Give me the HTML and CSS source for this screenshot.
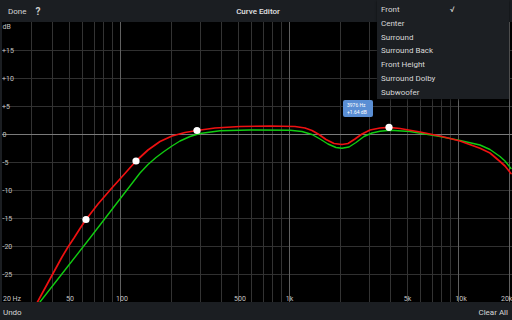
FILE: index.html
```html
<!DOCTYPE html>
<html>
<head>
<meta charset="utf-8">
<link rel="stylesheet" href="styles.css">
</head>
<body>
<div class="app">
  <header class="topbar">
    <div class="actions"><span class="btn">Done</span><span class="help">?</span></div>
    <div class="title">Curve Editor</div>
    <div></div>
  </header>
  <main class="chart">
    <svg class="graph" width="510" height="280" viewBox="2 22 510 280" xmlns="http://www.w3.org/2000/svg">
      <rect x="2" y="22" width="510" height="280" fill="#000"/>
      <g stroke="#303030" stroke-width="1">
        <line x1="2" y1="50.5" x2="512" y2="50.5"/>
        <line x1="2" y1="78.5" x2="512" y2="78.5"/>
        <line x1="2" y1="106.5" x2="512" y2="106.5"/>
        <line x1="2" y1="162.5" x2="512" y2="162.5"/>
        <line x1="2" y1="190.5" x2="512" y2="190.5"/>
        <line x1="2" y1="218.5" x2="512" y2="218.5"/>
        <line x1="2" y1="246.5" x2="512" y2="246.5"/>
        <line x1="2" y1="274.5" x2="512" y2="274.5"/>
      </g>
      <g stroke="#333" stroke-width="1">
        <line x1="31.5" y1="22" x2="31.5" y2="302"/>
        <line x1="52.5" y1="22" x2="52.5" y2="302"/>
        <line x1="69.5" y1="22" x2="69.5" y2="302"/>
        <line x1="82.5" y1="22" x2="82.5" y2="302"/>
        <line x1="94.5" y1="22" x2="94.5" y2="302"/>
        <line x1="103.5" y1="22" x2="103.5" y2="302"/>
        <line x1="112.5" y1="22" x2="112.5" y2="302"/>
        <line x1="171.5" y1="22" x2="171.5" y2="302"/>
        <line x1="200.5" y1="22" x2="200.5" y2="302"/>
        <line x1="221.5" y1="22" x2="221.5" y2="302"/>
        <line x1="238.5" y1="22" x2="238.5" y2="302"/>
        <line x1="251.5" y1="22" x2="251.5" y2="302"/>
        <line x1="263.5" y1="22" x2="263.5" y2="302"/>
        <line x1="272.5" y1="22" x2="272.5" y2="302"/>
        <line x1="281.5" y1="22" x2="281.5" y2="302"/>
        <line x1="340.5" y1="22" x2="340.5" y2="302"/>
        <line x1="369.5" y1="22" x2="369.5" y2="302"/>
        <line x1="390.5" y1="22" x2="390.5" y2="302"/>
        <line x1="407.5" y1="22" x2="407.5" y2="302"/>
        <line x1="420.5" y1="22" x2="420.5" y2="302"/>
        <line x1="432.5" y1="22" x2="432.5" y2="302"/>
        <line x1="441.5" y1="22" x2="441.5" y2="302"/>
        <line x1="450.5" y1="22" x2="450.5" y2="302"/>
      </g>
      <g stroke="#606060" stroke-width="1">
        <line x1="120.5" y1="22" x2="120.5" y2="302"/>
        <line x1="289.5" y1="22" x2="289.5" y2="302"/>
        <line x1="458.5" y1="22" x2="458.5" y2="302"/>
        <line x1="509.5" y1="22" x2="509.5" y2="302"/>
      </g>
      <line x1="2" y1="134.5" x2="512" y2="134.5" stroke="#7a7a7a" stroke-width="1"/>
      <g class="axis">
        <text x="2.5" y="28.5">dB</text>
        <text x="2" y="52.5">+15</text>
        <text x="2" y="80.5">+10</text>
        <text x="2" y="108.5">+5</text>
        <text x="2.5" y="136.5">0</text>
        <text x="2.5" y="164.5">-5</text>
        <text x="2.5" y="192.5">-10</text>
        <text x="2.5" y="220.5">-15</text>
        <text x="2.5" y="248.5">-20</text>
        <text x="2.5" y="276.5">-25</text>
        <text x="3" y="301">20 Hz</text>
        <text x="70" y="301" text-anchor="middle">50</text>
        <text x="122" y="301" text-anchor="middle">100</text>
        <text x="240" y="301" text-anchor="middle">500</text>
        <text x="289.5" y="301" text-anchor="middle">1k</text>
        <text x="407.5" y="301" text-anchor="middle">5k</text>
        <text x="461" y="301" text-anchor="middle">10k</text>
        <text x="501" y="301">20k</text>
      </g>
      <polyline class="curve green" points="37,306 40,302 65,270 90,238 115,205.5 140,173 148,164.5 156,157.5 164,151.5 172,146 180,141 190,136.5 200,133.5 220,130.8 250,130 290,130.3 302,131.5 312,134.5 320,139 328,144 336,147.5 342,148.3 349,147 356,142.5 364,136.5 372,133 380,131.3 390,130.3 410,131.5 440,136.5 460,140.5 480,145 490,149.5 500,156.5 505,161 511,168.5"/>
      <polyline class="curve red" points="35,307 37.5,302 44,290 50,279 56,268 62,257 68,247 74,238 80,228.5 86,219.5 98,204 111,189 124,174.5 136,161 148,150 160,141.5 172,136 185,132.5 197,130.5 215,128 240,126.5 270,126 295,126.5 305,128 312,130.5 319,134.5 326,139.5 334,143.5 342,144.5 348,143.5 355,139 362,134 370,130 380,128 389,127.3 400,128.5 420,132 440,136 460,141 480,148.3 490,153 500,161.5 505,166 511,173.5"/>
      <g fill="#fff">
        <circle cx="86" cy="219.5" r="3.6"/>
        <circle cx="136" cy="161" r="3.6"/>
        <circle cx="197" cy="130.5" r="3.6"/>
        <circle cx="389" cy="127.3" r="3.6"/>
      </g>
    </svg>
    <div class="tooltip"><div>3976 Hz</div><div>+1.64 dB</div></div>
  </main>
  <footer class="bottombar">
    <span class="btn">Undo</span>
    <span class="btn">Clear All</span>
  </footer>
  <ul class="menu">
    <li class="item"><span>Front</span><span class="check">√</span></li>
    <li class="item"><span>Center</span></li>
    <li class="item"><span>Surround</span></li>
    <li class="item"><span>Surround Back</span></li>
    <li class="item"><span>Front Height</span></li>
    <li class="item"><span>Surround Dolby</span></li>
    <li class="item"><span>Subwoofer</span></li>
  </ul>
</div>
</body>
</html>
```
FILE: styles.css
```css
* { box-sizing: border-box; }
html, body {
  margin: 0;
  padding: 0;
  background: #000;
}
body {
  width: 512px;
  height: 320px;
  overflow: hidden;
  font-family: Roboto, "Liberation Sans", sans-serif;
  color: #d6d6d6;
}
.app {
  position: relative;
  width: 512px;
  height: 320px;
  display: flex;
  flex-direction: column;
}
.topbar {
  height: 22px;
  flex: 0 0 22px;
  background: #1b1e22;
  display: grid;
  grid-template-columns: 1fr auto 1fr;
  align-items: center;
  padding: 1px 0 0 8px;
  font-size: 8px;
}
.actions {
  display: flex;
  align-items: center;
  gap: 9px;
}
.help {
  font-size: 10px;
  font-weight: bold;
  color: #cfcfcf;
}
.title {
  color: #e2e2e2;
  font-weight: 500;
  padding-right: 4px;
}
.chart {
  flex: 0 0 280px;
  height: 280px;
  background: #1b1e22;
  padding-left: 2px;
  position: relative;
}
.graph {
  display: block;
}
.axis text {
  font-family: Roboto, "Liberation Sans", sans-serif;
  font-size: 7px;
  fill: #c4c4c4;
}
.curve {
  fill: none;
  stroke-linejoin: round;
  stroke-linecap: round;
}
.red {
  stroke: #ee1111;
  stroke-width: 1.7;
}
.green {
  stroke: #11cc11;
  stroke-width: 1.4;
}
.tooltip {
  position: absolute;
  left: 343px;
  top: 78px;
  width: 30px;
  height: 17px;
  background: #5a8ed4;
  border-radius: 2px;
  padding: 2px 0 0 4px;
  font-size: 5px;
  line-height: 7.3px;
  color: #fff;
}
.bottombar {
  flex: 0 0 18px;
  height: 18px;
  background: #1b1e22;
  display: flex;
  justify-content: space-between;
  align-items: center;
  padding: 2px 4px 0 3px;
  font-size: 8px;
}
.menu {
  position: absolute;
  left: 377px;
  top: 0;
  width: 132px;
  height: 99px;
  margin: 0;
  padding: 3px 0 0 4px;
  list-style: none;
  background: #1c1f23;
  box-shadow: 0 1px 2px rgba(0, 0, 0, 0.6);
  font-size: 8px;
  line-height: 13.83px;
  color: #d8d8d8;
}
.item {
  display: grid;
  grid-template-columns: 69px auto;
}
.check {
  color: #e0e0e0;
}
```
